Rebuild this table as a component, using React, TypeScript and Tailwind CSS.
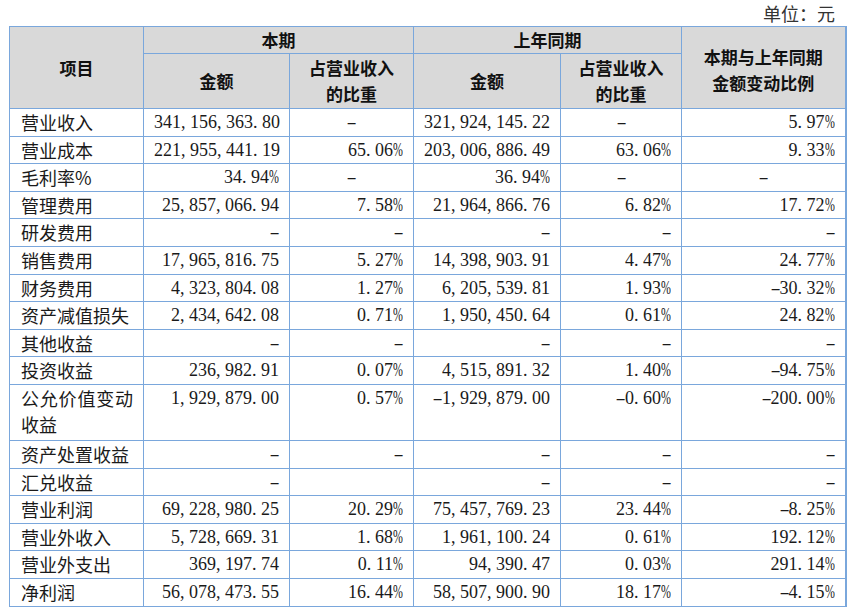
import React from 'react';

type Align = 'r' | 'c';
type Cell = { v: string; a?: Align };

interface Row {
  name: string;
  cells: Cell[];
  tall?: boolean;
}

const r = (v: string): Cell => ({ v, a: 'r' });
const c = (v: string): Cell => ({ v, a: 'c' });

const rows: Row[] = [
  { name: '营业收入', cells: [r('341,156,363.80'), c('-'), r('321,924,145.22'), c('-'), r('5.97%')] },
  { name: '营业成本', cells: [r('221,955,441.19'), r('65.06%'), r('203,006,886.49'), r('63.06%'), r('9.33%')] },
  { name: '毛利率%', cells: [r('34.94%'), c('-'), r('36.94%'), c('-'), c('-')] },
  { name: '管理费用', cells: [r('25,857,066.94'), r('7.58%'), r('21,964,866.76'), r('6.82%'), r('17.72%')] },
  { name: '研发费用', cells: [r('-'), r('-'), r('-'), r('-'), r('-')] },
  { name: '销售费用', cells: [r('17,965,816.75'), r('5.27%'), r('14,398,903.91'), r('4.47%'), r('24.77%')] },
  { name: '财务费用', cells: [r('4,323,804.08'), r('1.27%'), r('6,205,539.81'), r('1.93%'), r('-30.32%')] },
  { name: '资产减值损失', cells: [r('2,434,642.08'), r('0.71%'), r('1,950,450.64'), r('0.61%'), r('24.82%')] },
  { name: '其他收益', cells: [r('-'), r('-'), r('-'), r('-'), r('-')] },
  { name: '投资收益', cells: [r('236,982.91'), r('0.07%'), r('4,515,891.32'), r('1.40%'), r('-94.75%')] },
  { name: '公允价值变动收益', tall: true, cells: [r('1,929,879.00'), r('0.57%'), r('-1,929,879.00'), r('-0.60%'), r('-200.00%')] },
  { name: '资产处置收益', cells: [r('-'), r('-'), r('-'), r('-'), r('-')] },
  { name: '汇兑收益', cells: [r('-'), r(''), r('-'), r('-'), r('-')] },
  { name: '营业利润', cells: [r('69,228,980.25'), r('20.29%'), r('75,457,769.23'), r('23.44%'), r('-8.25%')] },
  { name: '营业外收入', cells: [r('5,728,669.31'), r('1.68%'), r('1,961,100.24'), r('0.61%'), r('192.12%')] },
  { name: '营业外支出', cells: [r('369,197.74'), r('0.11%'), r('94,390.47'), r('0.03%'), r('291.14%')] },
  { name: '净利润', cells: [r('56,078,473.55'), r('16.44%'), r('58,507,900.90'), r('18.17%'), r('-4.15%')] },
];

// half-width cells, like a Song face renders digits and punctuation
const Num: React.FC<{ text: string }> = ({ text }) => (
  <>
    {text.split('').map((ch, i) => {
      if (ch === ',' || ch === '.') {
        return <span key={i} className="inline-block w-[9px] text-left">{ch}</span>;
      }
      if (ch === '%') {
        return <span key={i} className="inline-block w-[10px] scale-x-[0.66] origin-left text-left">{ch}</span>;
      }
      if (ch === '-') {
        return <span key={i} className="inline-block w-[9px] text-center scale-x-[1.7]">{ch}</span>;
      }
      return <span key={i}>{ch}</span>;
    })}
  </>
);

const border = 'border border-[#7aa7dc]';
const head = `${border} bg-[#d9d9d9] font-bold text-center text-[17px] leading-[26px] text-[#111]`;

export default function App() {
  return (
    <div className="w-[852px] h-[613px] bg-white text-[#1a1a1a] font-['Noto_Sans_CJK_SC',sans-serif]">
      <div className="h-[26px] pr-[17px] text-right text-[18px] leading-[26px] text-[#333]">单位：元</div>
      <table className="ml-[9px] w-[836px] table-fixed border-collapse border-r-2 border-[#7aa7dc]">
        <colgroup>
          <col className="w-[134px]" />
          <col className="w-[146px]" />
          <col className="w-[124px]" />
          <col className="w-[147px]" />
          <col className="w-[121px]" />
          <col className="w-[164px]" />
        </colgroup>
        <thead>
          <tr className="h-[27px]">
            <th rowSpan={2} className={head}>项目</th>
            <th colSpan={2} className={head}>本期</th>
            <th colSpan={2} className={head}>上年同期</th>
            <th rowSpan={2} className={`${head} pt-[4px]`}>
              本期与上年同期
              <br />
              金额变动比例
            </th>
          </tr>
          <tr className="h-[55px]">
            <th className={head}>金额</th>
            <th className={head}>
              占营业收入
              <br />
              的比重
            </th>
            <th className={head}>金额</th>
            <th className={head}>
              占营业收入
              <br />
              的比重
            </th>
          </tr>
        </thead>
        <tbody>
          {rows.map((row) => (
            <tr key={row.name} className={row.tall ? 'h-[56px]' : 'h-[27.6px]'}>
              <td className={`${border} align-top pl-[11px] pr-[10px] text-justify text-[18px] leading-[26px]`}>
                {row.name}
              </td>
              {row.cells.map((cell, i) => (
                <td
                  key={i}
                  className={`${border} align-top px-[10px] font-['Liberation_Serif',serif] text-[18px] leading-[26px] whitespace-nowrap ${
                    cell.a === 'c' ? 'text-center' : 'text-right'
                  }`}
                >
                  <Num text={cell.v} />
                </td>
              ))}
            </tr>
          ))}
        </tbody>
      </table>
    </div>
  );
}
